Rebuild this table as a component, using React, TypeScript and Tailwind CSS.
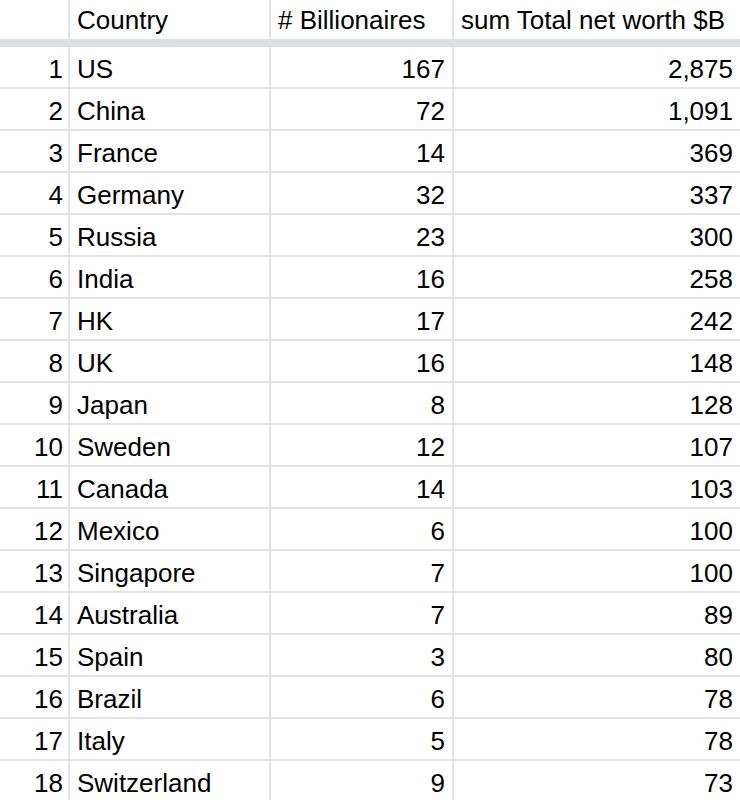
const rows: [string, string, string][] = [
  ['US', '167', '2,875'],
  ['China', '72', '1,091'],
  ['France', '14', '369'],
  ['Germany', '32', '337'],
  ['Russia', '23', '300'],
  ['India', '16', '258'],
  ['HK', '17', '242'],
  ['UK', '16', '148'],
  ['Japan', '8', '128'],
  ['Sweden', '12', '107'],
  ['Canada', '14', '103'],
  ['Mexico', '6', '100'],
  ['Singapore', '7', '100'],
  ['Australia', '7', '89'],
  ['Spain', '3', '80'],
  ['Brazil', '6', '78'],
  ['Italy', '5', '78'],
  ['Switzerland', '9', '73'],
]

const cols = 'grid grid-cols-[70px_201px_183px_1fr]'

export default function App() {
  return (
    <div className="h-[800px] w-[740px] overflow-hidden bg-white font-['Liberation_Sans',Arial,sans-serif] text-[26px] leading-none text-black">
      <div className={`${cols} h-[39px]`}>
        <div className="border-r-2 border-[#e2e2e2]" />
        <div className="flex items-center border-r-2 border-[#e2e2e2] pl-[7px]">Country</div>
        <div className="flex items-center border-r-2 border-[#e2e2e2] pl-[7px]"># Billionaires</div>
        <div className="flex items-center pl-[7px]">sum Total net worth $B</div>
      </div>
      <div className={`${cols} h-[8px] bg-[#dadfe6]`}>
        <div className="border-r-2 border-[#e2e2e2]" />
        <div />
        <div />
        <div />
      </div>
      {rows.map(([country, count, worth], i) => (
        <div key={country} className={`${cols} h-[42px] border-b-2 border-[#e2e2e2]`}>
          <div className="flex items-center justify-end border-r-2 border-[#e2e2e2] pt-[4px] pr-[5px]">{i + 1}</div>
          <div className="flex items-center border-r-2 border-[#e2e2e2] pt-[4px] pl-[7px]">{country}</div>
          <div className="flex items-center justify-end border-r-2 border-[#e2e2e2] pt-[4px] pr-[7px]">{count}</div>
          <div className="flex items-center justify-end pt-[4px] pr-[7px]">{worth}</div>
        </div>
      ))}
    </div>
  )
}
